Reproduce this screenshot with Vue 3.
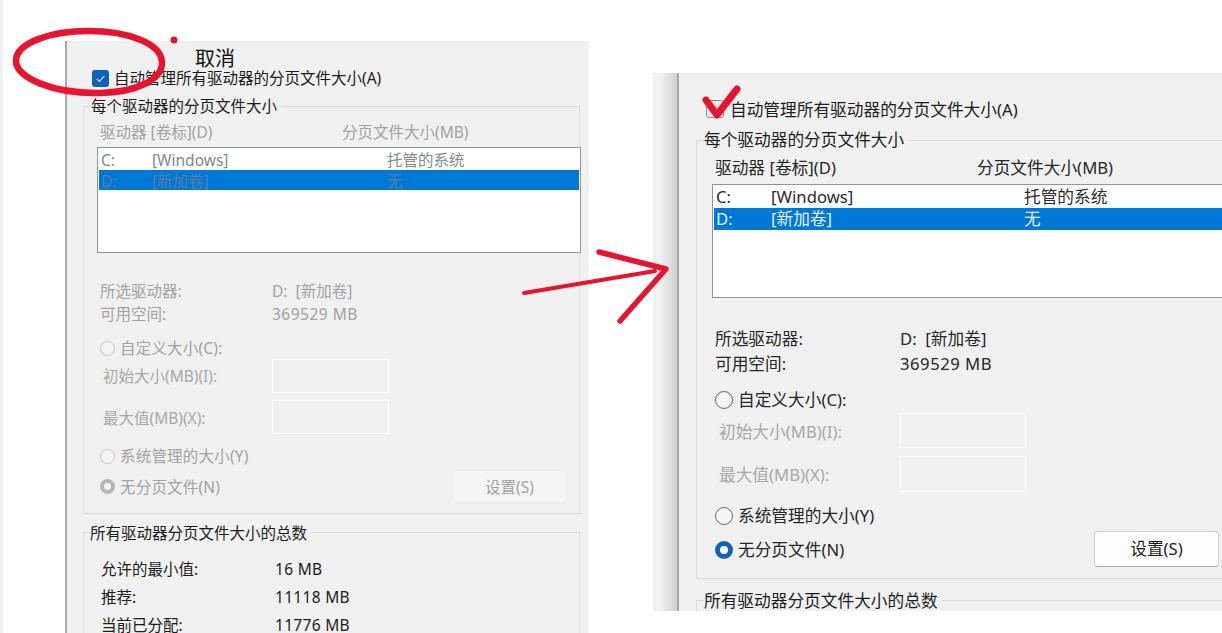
<script setup>
const panels = [
  { id: 'left', auto: true, summary: true },
  { id: 'right', auto: false, summary: false }
]
const totals = [
  ['允许的最小值:', '16 MB'],
  ['推荐:', '11118 MB'],
  ['当前已分配:', '11776 MB']
]
</script>

<template>
  <div class="page">
    <div class="edge"></div>

    <section v-for="p in panels" :key="p.id" class="panel" :class="p.id">
      <label class="autorow">
        <span class="box" :class="{ on: p.auto }">
          <svg v-if="p.auto" viewBox="0 0 18 18" width="100%" height="100%">
            <path d="M5 9.4 7.8 12 13 6.4" fill="none" stroke="#d5e4f5" stroke-width="1.2" />
          </svg>
        </span>
        <span class="autotext">自动管理所有驱动器的分页文件大小(A)</span>
      </label>

      <div class="group perdrive">
        <div class="legend">每个驱动器的分页文件大小</div>
        <div class="cols dim">
          <span class="c1">驱动器 [卷标](D)</span>
          <span>分页文件大小(MB)</span>
        </div>
        <div class="list">
          <div class="item dim-item"><span class="d">C:</span><span class="v">[Windows]</span><span>托管的系统</span></div>
          <div class="item sel"><span class="d">D:</span><span class="v">[新加卷]</span><span>无</span></div>
        </div>
        <div class="info dim first"><span class="k">所选驱动器:</span><span>D:&nbsp; [新加卷]</span></div>
        <div class="info dim"><span class="k">可用空间:</span><span class="num">369529 MB</span></div>
        <div class="radio dim r1"><span class="dot"></span>自定义大小(C):</div>
        <div class="size s1"><span class="k2">初始大小(MB)(I):</span><span class="input"></span></div>
        <div class="size s2"><span class="k2">最大值(MB)(X):</span><span class="input"></span></div>
        <div class="radio dim r2"><span class="dot"></span>系统管理的大小(Y)</div>
        <div class="lastrow">
          <div class="radio dim"><span class="dot checked"></span>无分页文件(N)</div>
          <button class="set" type="button">设置(S)</button>
        </div>
      </div>

      <div class="group totals">
        <div class="legend">所有驱动器分页文件大小的总数</div>
        <template v-if="p.summary">
          <div v-for="t in totals" :key="t[0]" class="total"><span class="tk">{{ t[0] }}</span><span class="tv">{{ t[1] }}</span></div>
        </template>
      </div>
    </section>

    <div class="note">取消</div>

    <svg class="ink" viewBox="0 0 1222 633" width="1222" height="633">
      <g fill="none" stroke="#e8142f" stroke-linecap="round" stroke-linejoin="round">
        <path stroke-width="6.5" d="M88 31C50 31 17 43 16 60C15 78 54 94 100 93C138 92 163 79 162 62C161 44 130 31 88 31Z" />
        <path stroke-width="4" d="M524 293 655 271" />
        <path stroke-width="5.5" d="M599 252 666 269 620 321" />
        <path stroke-width="7" d="M706 100 717 115 737 89" />
      </g>
      <circle cx="174" cy="40" r="3.5" fill="#e8142f" />
    </svg>
  </div>
</template>

<style>
html, body { margin: 0; background: #fff; overflow: hidden; }
</style>

<style scoped>
.page {
  position: relative;
  width: 1222px;
  height: 633px;
  overflow: hidden;
  background: #fff;
  font-family: "Noto Sans", "Noto Sans CJK SC", sans-serif;
  color: #1c1c1c;
}
.edge {
  position: absolute;
  left: 0;
  top: 0;
  bottom: 0;
  width: 3px;
  background: #f0f0f0;
}
.panel {
  position: absolute;
  box-sizing: border-box;
  overflow: hidden;
  background: #f0f0f0;
  font-size: var(--fs);
  line-height: 20px;
  white-space: nowrap;
}
.left {
  --fs: 15.5px;
  --dim: #a2a2a2;
  --box: 17px;
  --dot: 15px;
  left: 65px;
  top: 41px;
  width: 524px;
  height: 592px;
  border-left: 2px solid #a9a9a9;
  padding-left: 16px;
}
.right {
  --fs: 16.7px;
  --dim: #262626;
  --box: 18px;
  --dot: 18px;
  left: 653px;
  top: 73px;
  width: 569px;
  height: 538px;
  padding-left: 43px;
}
.right::before {
  content: "";
  position: absolute;
  left: 0;
  top: 0;
  bottom: 0;
  width: 26px;
  background: linear-gradient(to right, #f0f0f0 0 30%, #d0d0d0 92%, #a8a8a8 92%);
}

.autorow { display: flex; align-items: center; }
.right .autotext { padding-top: 2px; }
.left .autorow { margin: 28px 0 0 9px; gap: 5px; height: 18px; }
.right .autorow { margin: 27px 0 0 10px; gap: 6px; height: 18px; }
.box {
  box-sizing: border-box;
  flex: none;
  width: var(--box);
  height: var(--box);
  border-radius: 3px;
  border: 1px solid #8a8a8a;
  background: #ececec;
}
.box.on { border: none; background: #0f62b8; }

.group {
  box-sizing: border-box;
  border: 1px solid #dadada;
}
.left .group { width: 497px; }
.right .group { width: 560px; }
.left .perdrive { margin-top: 19px; height: 408px; padding: 16px 0 0 16px; }
.right .perdrive { margin-top: 22px; height: 439px; padding: 17px 0 0 18px; }
.left .totals { margin-top: 18px; height: 140px; padding: 26px 0 0 17px; }
.right .totals { margin-top: 21px; height: 60px; }

.legend {
  width: fit-content;
  background: #f0f0f0;
  color: #1c1c1c;
  height: 20px;
}
.left .legend { margin: -27px 0 6px -9px; padding-right: 4px; }
.left .totals .legend { margin: -36px 0 12px -11px; }
.right .legend { margin: -28px 0 8px -11px; padding-right: 4px; }
.right .totals .legend { margin: -10px 0 0 7px; }

.cols, .info { display: flex; }
.dim { color: var(--dim); }
.cols { height: 20px; }
.left .c1 { width: 242px; }
.right .c1 { width: 262px; }

.list {
  box-sizing: border-box;
  background: #fff;
  border: 1px solid #8f959c;
  padding: 1px;
}
.left .list { margin: 5px 0 0 -3px; width: 484px; height: 106px; }
.right .list { margin: 6px 0 0 -3px; width: 560px; height: 114px; }
.item { display: flex; }
.left .item { height: 20.5px; line-height: 20.5px; padding-left: 2px; color: #7f8891; }
.left .item > span { padding-top: 1px; }
.right .item { height: 22px; line-height: 22px; padding-left: 2px; color: #2b2b2b; }
.left .d { width: 51px; }
.right .d { width: 55px; }
.left .v { width: 235px; }
.right .v { width: 253px; }
.item.sel { background: #0078d7; }
.left .item.sel { color: #5a7da3; }
.right .item.sel { color: #e6f1fb; }

.info { height: 23px; line-height: 23px; }
.right .info { height: 25px; line-height: 25px; }
.left .info.first { margin-top: 27px; }
.right .info.first { margin-top: 28px; }
.left .k { width: 172px; }
.right .k { width: 185px; }
.num { letter-spacing: 0.5px; }

.radio { display: flex; align-items: center; height: 20px; }
.left .radio { gap: 5px; letter-spacing: 0.2px; }
.right .radio { gap: 5px; }
.left .r1 { margin-top: 12px; }
.right .r1 { margin-top: 14px; }
.left .r2 { margin-top: 12px; }
.right .r2 { margin-top: 14px; }
.dot {
  box-sizing: border-box;
  flex: none;
  width: var(--dot);
  height: var(--dot);
  border-radius: 50%;
  border: 1px solid #c4c4c4;
  background: #f3f3f3;
}
.right .dot { border-color: #6b6b6b; }
.dot.checked { border: 4.5px solid #b5b5b5; background: #f7f7f7; }
.right .dot.checked { border: 5px solid #0f62b8; background: #fff; }

.size { display: flex; align-items: center; color: #a8a8a8; }
.left .size { padding-left: 3px; height: 34px; }
.right .size { padding-left: 4px; height: 35px; }
.left .s1 { margin-top: 1px; }
.right .s1 { margin-top: 3px; }
.left .s2 { margin-top: 7px; }
.right .s2 { margin-top: 8px; height: 36px; }
.k2 { flex: none; }
.left .s2 .k2, .right .k2 { padding-top: 2px; }
.left .k2 { width: 169px; }
.right .k2 { width: 181px; }
.input {
  box-sizing: border-box;
  height: 100%;
  border: 1px solid #fbfbfb;
  background: #f0f0f0;
}
.left .input { width: 117px; }
.right .input { width: 126px; }

.lastrow { display: flex; align-items: center; justify-content: space-between; }
.left .lastrow { margin-top: 4px; width: 467px; }
.right .lastrow { margin-top: 5px; width: 504px; }
.right .lastrow .radio { padding-top: 2px; }
.set {
  box-sizing: border-box;
  font: inherit;
  border-radius: 4px;
  padding: 0;
}
.left .set {
  width: 115px;
  height: 33px;
  border: 1px solid #ebebeb;
  background: #f4f4f4;
  color: #a2a2a2;
}
.right .set {
  width: 125px;
  height: 36px;
  border: 1px solid #d0d0d0;
  border-bottom-color: #aeaeae;
  background: #fdfdfd;
  color: #1c1c1c;
}

.total { display: flex; height: 28px; line-height: 28px; }
.tk { width: 174px; }
.tv { letter-spacing: 0.3px; }

.note {
  position: absolute;
  left: 195px;
  top: 45px;
  font-size: 20px;
  line-height: 28px;
  color: #111;
}
.ink {
  position: absolute;
  left: 0;
  top: 0;
  pointer-events: none;
}
</style>
